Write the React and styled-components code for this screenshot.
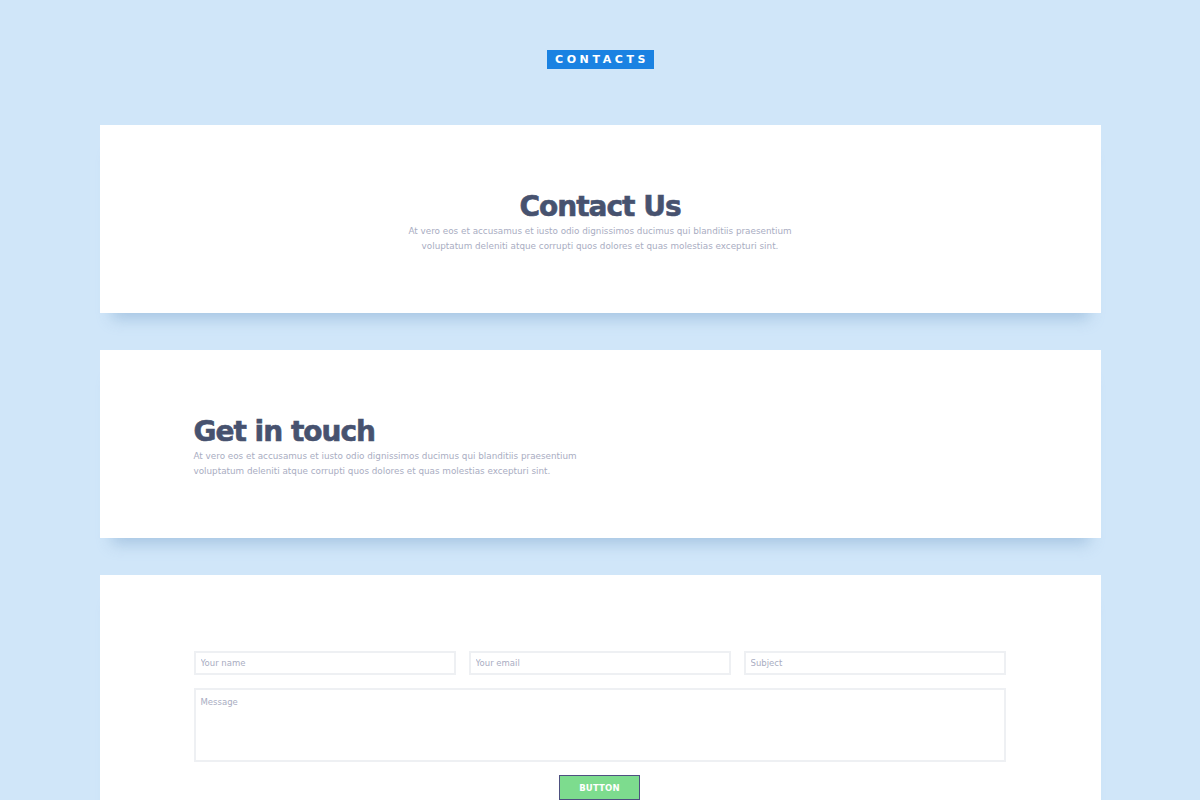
import React from "react";
import styled, { createGlobalStyle } from "styled-components";

const GlobalStyle = createGlobalStyle`
  html, body {
    margin: 0;
    padding: 0;
    background: #d0e6f9;
    font-family: "DejaVu Sans", "Open Sans", sans-serif;
  }
  * { box-sizing: border-box; }
`;

const Page = styled.div`
  width: 1200px;
  height: 800px;
  overflow: hidden;
  padding-top: 50px;
  display: flex;
  flex-direction: column;
  align-items: center;
`;

const Badge = styled.div`
  flex-shrink: 0;
  background: #1a82e2;
  color: #fff;
  font-family: "DejaVu Sans", sans-serif;
  font-weight: 700;
  font-size: 11px;
  letter-spacing: 3.6px;
  height: 19px;
  width: 107px;
  display: flex;
  align-items: center;
  justify-content: center;
  padding-left: 4px;
`;

const Stack = styled.div`
  flex-shrink: 0;
  margin-top: 56px;
  display: flex;
  flex-direction: column;
  gap: 37px;
`;

const Card = styled.section`
  flex-shrink: 0;
  width: 1001px;
  height: ${(p) => p.$h || 188}px;
  background: #fff;
  box-shadow: 0 18px 14px -12px rgba(120, 160, 200, 0.45);
  display: flex;
  flex-direction: column;
  justify-content: ${(p) => (p.$top ? "flex-start" : "center")};
  align-items: ${(p) => (p.$center ? "center" : "flex-start")};
  text-align: ${(p) => (p.$center ? "center" : "left")};
  padding: ${(p) => (p.$top ? "76px 94px 0" : "0 94px")};
`;

const Title = styled.h2`
  margin: 5px 0 0;
  font-family: "DejaVu Sans", sans-serif;
  font-weight: 700;
  font-size: 28px;
  letter-spacing: -1px;
  color: #47526f;
  -webkit-text-stroke: 0.6px #47526f;
  line-height: 34px;
`;

const Text = styled.p`
  margin: 0;
  font-size: 8.8px;
  line-height: 15px;
  color: #a9adc2;
`;

const Form = styled.form`
  width: 812px;
  display: flex;
  flex-direction: column;
  gap: 13px;
`;

const Row = styled.div`
  display: grid;
  grid-template-columns: repeat(3, 1fr);
  gap: 13px;
`;

const Field = styled.input`
  height: 24px;
  border: 2px solid #eef0f3;
  padding: 0 5px;
  font-family: "DejaVu Sans", sans-serif;
  font-size: 8.5px;
  color: #a9adc2;
  outline: none;
  &::placeholder { color: #a9adc2; }
`;

const Message = styled.textarea`
  height: 74px;
  border: 2px solid #eef0f3;
  padding: 7px 5px;
  resize: none;
  font-family: "DejaVu Sans", sans-serif;
  font-size: 8.5px;
  outline: none;
  &::placeholder { color: #a9adc2; }
`;

const Button = styled.button`
  align-self: center;
  width: 81px;
  height: 25px;
  background: #7ddc8e;
  border: 1.5px solid #4e5080;
  color: #fff;
  font-family: "DejaVu Sans", sans-serif;
  font-weight: 700;
  font-size: 8.5px;
  letter-spacing: 0.2px;
`;

const copy = (
  <>
    At vero eos et accusamus et iusto odio dignissimos ducimus qui blanditiis praesentium
    <br />
    voluptatum deleniti atque corrupti quos dolores et quas molestias excepturi sint.
  </>
);

export default function App() {
  return (
    <Page>
      <GlobalStyle />
      <Badge>CONTACTS</Badge>
      <Stack>
        <Card $center>
          <Title>Contact Us</Title>
          <Text>{copy}</Text>
        </Card>
        <Card>
          <Title>Get in touch</Title>
          <Text>{copy}</Text>
        </Card>
        <Card $top $h={260}>
          <Form onSubmit={(e) => e.preventDefault()}>
            <Row>
              <Field placeholder="Your name" />
              <Field placeholder="Your email" />
              <Field placeholder="Subject" />
            </Row>
            <Message placeholder="Message" />
            <Button type="submit">BUTTON</Button>
          </Form>
        </Card>
      </Stack>
    </Page>
  );
}
